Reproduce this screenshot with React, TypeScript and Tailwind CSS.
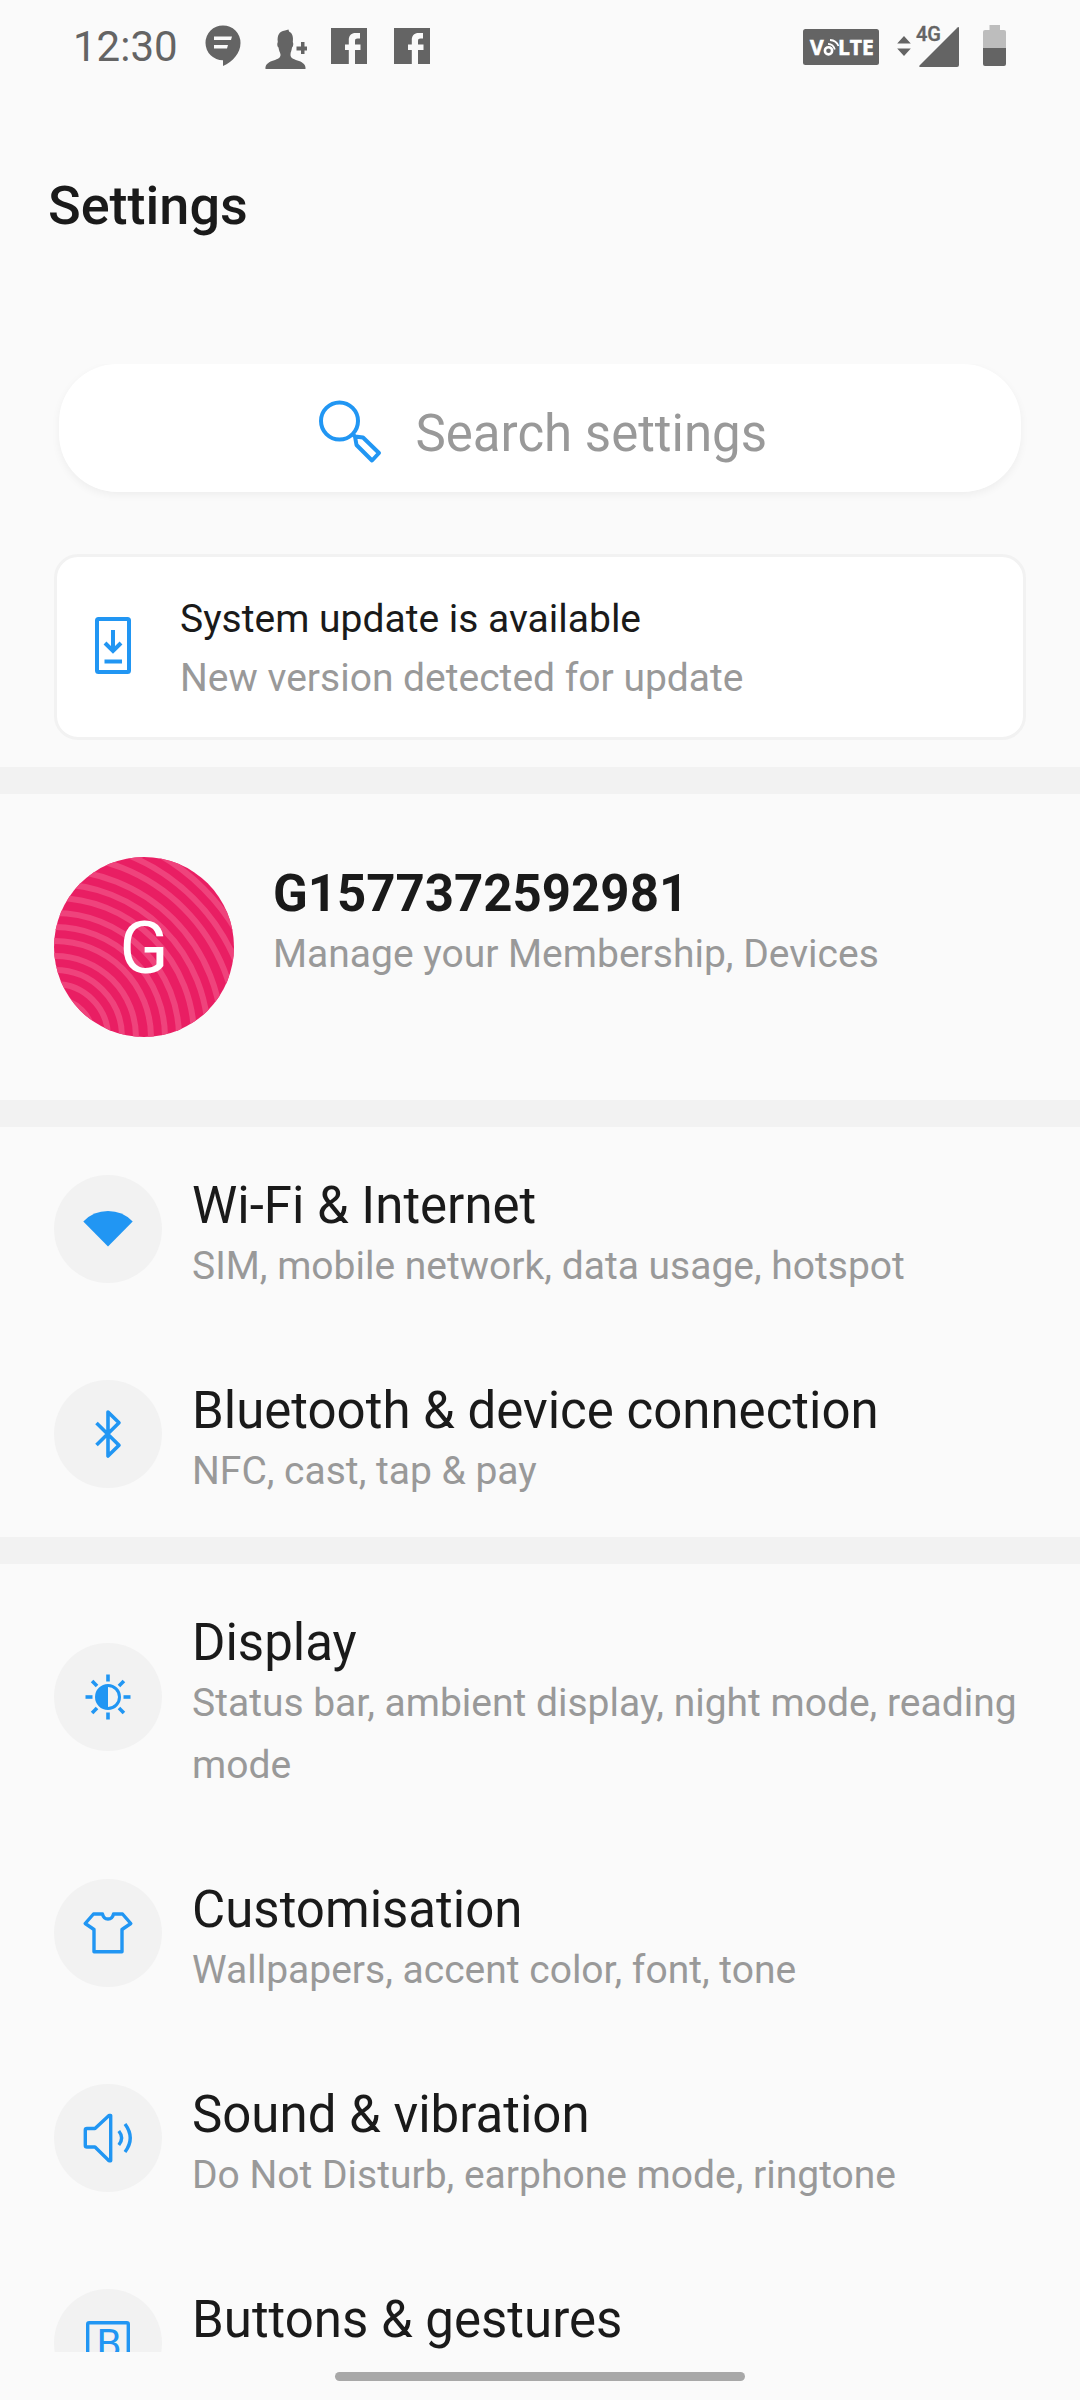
import React from "react";

type IconProps = { className?: string };

const stroke = {
  fill: "none",
  stroke: "#2196f3",
  strokeLinejoin: "round" as const,
};

/* ---------- status bar icons ---------- */

const ChatIcon = () => (
  <svg className="h-[44px] w-[42px]" viewBox="0 0 42 44" fill="#646464" aria-hidden="true">
    <path d="M21 0.5A17.3 17.3 0 0 0 3.5 18 17.3 17.3 0 0 0 21 35.2V41C31 36.500 38.500 28 38.500 18A17.300 17.300 0 0 0 21 .5Z" />
    <path d="M12 11.500H30L29 15H12ZM12 20H26L25 23.500H12Z" fill="#fafafa" />
  </svg>
);

const PersonAddIcon = () => (
  <svg className="h-[44px] w-[42px]" viewBox="0 0 42 44" fill="#646464" aria-hidden="true">
    <path d="M0.500 44C0 40 3 37.500 7 36C11 34.500 16 33.500 15.500 29.500C15 27 14 26 13.500 22.500C12 21.500 12 18.500 12.800 17C12 11 14 6 20 5.500L23.500 4.500L24 6.500C27.500 8 28.500 12 27.800 17C28.600 18.500 28.400 21.500 27 22.500C26.600 26 25.500 27 25.500 29.500C25 33.500 30 34.500 34 36C38 37.500 41 40 40.500 44Z" />
    <path d="M36 17H39.500V21.500H42V25.500H39.500V29H36V25.500H31.500V21.500H36Z" />
  </svg>
);

const FacebookIcon = () => (
  <svg className="h-[44px] w-[42px]" viewBox="0 0 42 44" fill="#646464" aria-hidden="true">
    <path d="M3 3H39V39H27V25H32.500V19.500H27V16C27 14.200 27.800 13.500 29.500 13.500H32V8H27.500C23.500 8 20.800 10.500 20.800 15V19.500H17V25H20.800V39H3Z" />
  </svg>
);

const VolteBadge = () => (
  <svg className="h-[36px] w-[76px]" viewBox="0 0 76 36" role="img" aria-label="VoLTE">
    <rect width="76" height="36" rx="2.500" fill="#646464" />
    <g fill="#fff" stroke="#fff" strokeWidth="0.600" fontFamily="'Open Sans', sans-serif" fontWeight="700">
      <text x="7" y="26" fontSize="21">V</text>
      <text x="35" y="26" fontSize="21">LTE</text>
    </g>
    <circle cx="25.500" cy="21.800" r="3.600" fill="none" stroke="#fff" strokeWidth="2.600" />
    <path d="M25 14.800Q30.500 15 31.800 20.500M27 11Q33.500 11.500 35.500 17" fill="none" stroke="#fff" strokeWidth="1.800" />
  </svg>
);

const SignalIcon = () => (
  <svg className="h-[44px] w-[62px] overflow-visible" viewBox="0 0 62 44" fill="#646464" role="img" aria-label="4G signal">
    <path d="M7 11L13.800 18.500H.2ZM7 31L.2 23.500H13.800Z" />
    <path d="M60.500 2.500Q62 1.500 62 3V40Q62 42 60 42H23Q21.500 41.500 22.500 40.500Z" />
    <text x="19" y="16" fontSize="20" fontWeight="500" fontFamily="Roboto, sans-serif" stroke="#646464" strokeWidth="0.400">4G</text>
  </svg>
);

const BatteryIcon = () => (
  <svg className="h-[44px] w-[23px]" viewBox="0 0 23 44" role="img" aria-label="Battery">
    <path d="M6.500 0H17V5H21Q23 5 23 7V23H0V7Q0 5 2 5H6.500Z" fill="#bdbdbd" />
    <path d="M0 23H23V39Q23 41 21 41H2Q0 41 0 39Z" fill="#646464" />
  </svg>
);

/* ---------- content icons ---------- */

const SearchIcon = () => (
  <svg className="h-[64px] w-[64px] shrink-0" viewBox="0 0 64 64" {...stroke} strokeWidth="4" aria-hidden="true">
    <circle cx="20.500" cy="21" r="18.500" />
    <path d="M33.500 34L36 36.500M36 36.500L44 37.500L60 53L53 60.500L37.500 45Z" />
  </svg>
);

const UpdateIcon = () => (
  <svg className="h-[64px] w-[36px] shrink-0" viewBox="0 0 36 64" {...stroke} strokeWidth="4" aria-hidden="true">
    <rect x="2" y="2" width="32" height="53" rx="1.500" />
    <path d="M18 13V34M10 26L18 34L26 26" strokeLinejoin="miter" />
    <path d="M9.500 44.500H27" />
  </svg>
);

const WifiIcon = ({ className }: IconProps) => (
  <svg className={className} viewBox="0 0 108 108" fill="#2196f3" aria-hidden="true">
    <path d="M54 71.500L29.300 46.400Q39.500 36 54 36Q68.500 36 78.700 46.400Z" />
  </svg>
);

const BluetoothIcon = ({ className }: IconProps) => (
  <svg className={className} viewBox="0 0 108 108" {...stroke} strokeWidth="3.600" aria-hidden="true">
    <path d="M42.500 43L65 65.300L54 76V32L65 42.700L42.500 65" />
  </svg>
);

const rays = [0, 45, 90, 135, 180, 225, 270, 315];

const DisplayIcon = ({ className }: IconProps) => (
  <svg className={className} viewBox="0 0 108 108" {...stroke} strokeWidth="3.600" aria-hidden="true">
    <circle cx="54" cy="54" r="11.500" strokeWidth="3" />
    <path d="M54 42V66A12 12 0 0 1 54 42Z" fill="#2196f3" stroke="none" />
    {rays.map((angle) => (
      <path key={angle} d="M54 31.500V38.500" transform={`rotate(${angle} 54 54)`} />
    ))}
  </svg>
);

const ShirtIcon = ({ className }: IconProps) => (
  <svg className={className} viewBox="0 0 108 108" {...stroke} strokeWidth="3.400" aria-hidden="true">
    <path d="M39.500 35H48.500Q49.500 40 54 40Q58.500 40 59.500 35H68.500L76.800 44.500L68 50.500V72.800H40V50.500L31.200 44.500Z" />
  </svg>
);

const SoundIcon = ({ className }: IconProps) => (
  <svg className={className} viewBox="0 0 108 108" {...stroke} strokeWidth="3.400" aria-hidden="true">
    <path d="M33 44.500H41L55 31.500H56.700V76.800H55L41 63H33Q31.300 63 31.300 61.500V46Q31.300 44.500 33 44.500Z" />
    <path d="M64.800 47Q70.500 54 64.800 61M71 40Q81.500 54 71 68" />
  </svg>
);

const ButtonsIcon = ({ className }: IconProps) => (
  <svg className={className} viewBox="0 0 108 108" {...stroke} strokeWidth="3.400" aria-hidden="true">
    <rect x="33.700" y="33.800" width="40.600" height="40.600" rx="1.500" />
    <text x="55" y="69" textAnchor="middle" fontSize="40" fontFamily="Roboto, sans-serif" fill="#2196f3" stroke="none">
      B
    </text>
  </svg>
);

/* ---------- building blocks ---------- */

const ringRadii = [38, 53, 67, 81, 96, 110, 124, 139, 153, 167, 182, 196, 210];

const Avatar = () => (
  <svg className="size-[180px] shrink-0 rounded-full bg-[#e91e63]" viewBox="0 0 180 180" role="img" aria-label="Profile picture">
    <g fill="none" stroke="#ef437c" strokeWidth="6">
      {ringRadii.map((r) => (
        <circle key={r} cx="1" cy="180" r={r} />
      ))}
    </g>
    <text x="90" y="116" textAnchor="middle" fontSize="72" fontFamily="Roboto, sans-serif" fill="#fff">
      G
    </text>
  </svg>
);

const Divider = () => <div className="h-[27px] shrink-0 bg-[#f2f2f2]" />;

type Item = {
  title: string;
  summary?: string;
  Icon: (props: IconProps) => React.ReactElement;
};

const SettingRow = ({ title, summary, Icon }: Item) => (
  <li>
    <a href="#" className="flex min-h-[205px] items-center gap-[30px] pr-[48px] pl-[54px]">
      <span className="mb-px shrink-0 rounded-full bg-[#f2f2f2]">
        <Icon className="size-[108px]" />
      </span>
      <span className="flex flex-col self-start pt-[50px] pb-[35px]">
        <span className="text-[51px] leading-[58px] text-[#1a1a1a]">{title}</span>
        {summary && <span className="text-[39px] leading-[62px] text-[#999999]">{summary}</span>}
      </span>
    </a>
  </li>
);

const networkItems: Item[] = [
  { title: "Wi-Fi & Internet", summary: "SIM, mobile network, data usage, hotspot", Icon: WifiIcon },
  { title: "Bluetooth & device connection", summary: "NFC, cast, tap & pay", Icon: BluetoothIcon },
];

const deviceItems: Item[] = [
  { title: "Display", summary: "Status bar, ambient display, night mode, reading mode", Icon: DisplayIcon },
  { title: "Customisation", summary: "Wallpapers, accent color, font, tone", Icon: ShirtIcon },
  { title: "Sound & vibration", summary: "Do Not Disturb, earphone mode, ringtone", Icon: SoundIcon },
  { title: "Buttons & gestures", Icon: ButtonsIcon },
];

export default function App() {
  return (
    <div className="flex h-screen flex-col bg-[#fafafa] font-[Roboto,sans-serif]">
      <div className="flex h-[94px] shrink-0 items-center justify-between pr-[74px] pl-[73px]">
        <div className="flex items-center gap-[21px]">
          <time className="pr-[3px] text-[42px] leading-[48px] text-[#646464]">12:30</time>
          <ChatIcon />
          <PersonAddIcon />
          <FacebookIcon />
          <FacebookIcon />
        </div>
        <div className="flex items-center">
          <VolteBadge />
          <span className="ml-[18px]">
            <SignalIcon />
          </span>
          <span className="ml-[24px]">
            <BatteryIcon />
          </span>
        </div>
      </div>

      <header className="shrink-0 px-[48px] pt-[80px] pb-[126px]">
        <h1 className="text-[54px] leading-[64px] font-medium text-[#1a1a1a]">Settings</h1>
      </header>

      <main className="min-h-0 flex-1 overflow-y-auto [scrollbar-width:none]">
        <label className="mx-[59px] flex h-[128px] items-center justify-center gap-[33px] rounded-[58px] bg-white pt-2 pl-[6px] shadow-[0_3px_8px_rgba(0,0,0,0.05)]">
          <SearchIcon />
          <input
            type="text"
            aria-label="Search settings"
            placeholder="Search settings"
            className="w-[352px] pt-1 text-[51px] leading-[60px] text-[#1a1a1a] outline-none placeholder:text-[#999999]"
          />
        </label>

        <a
          href="#"
          className="mx-[54px] mt-[62px] mb-[27px] flex items-center gap-[49px] rounded-[24px] border-3 border-[#f2f2f2] bg-white pt-[33px] pr-[36px] pb-[29px] pl-[38px]"
        >
          <UpdateIcon />
          <span className="flex flex-col text-[39px] leading-[59px]">
            <span className="text-[#1a1a1a]">System update is available</span>
            <span className="text-[#999999]">New version detected for update</span>
          </span>
        </a>

        <Divider />

        <a href="#" className="flex items-start gap-[39px] px-[54px] py-[63px]">
          <Avatar />
          <span className="flex flex-col pt-[7px]">
            <span className="text-[51px] leading-[60px] font-bold text-[#1a1a1a]">G1577372592981</span>
            <span className="text-[39px] leading-[60px] text-[#999999]">Manage your Membership, Devices</span>
          </span>
        </a>

        <Divider />

        <ul>
          {networkItems.map((item) => (
            <SettingRow key={item.title} {...item} />
          ))}
        </ul>

        <Divider />

        <ul>
          {deviceItems.map((item) => (
            <SettingRow key={item.title} {...item} />
          ))}
        </ul>
      </main>

      <div className="flex h-[48px] shrink-0 justify-center pt-[20px]">
        <div className="h-[9px] w-[38%] rounded-full bg-[#a8a8a8]" />
      </div>
    </div>
  );
}
